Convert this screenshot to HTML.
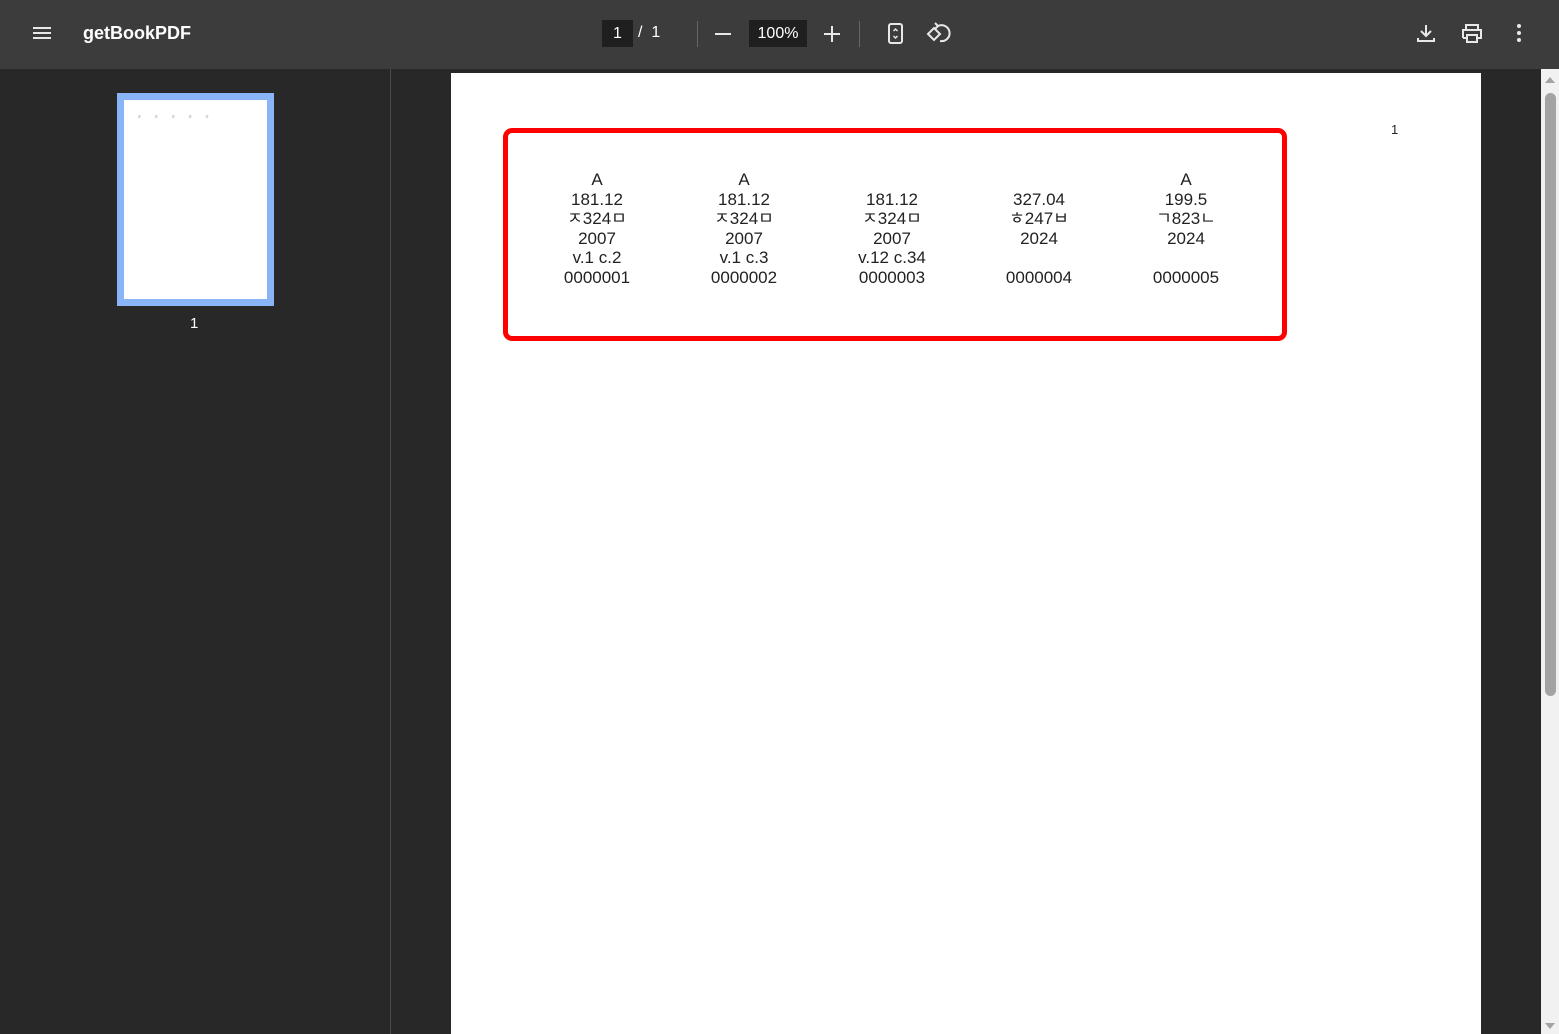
<!DOCTYPE html>
<html><head><meta charset="utf-8"><style>
*{margin:0;padding:0;box-sizing:border-box}
body{width:1559px;height:1034px;background:#282828;overflow:hidden;position:relative;font-family:"Liberation Sans","Noto Sans CJK KR",sans-serif}
.tb{position:absolute;left:0;top:0;width:1559px;height:69px;background:#3c3c3c;color:#fff}
.side{position:absolute;left:0;top:69px;width:391px;height:965px;background:#282828;border-right:1px solid #4a4a4a}
.page{position:absolute;left:451px;top:73px;width:1030px;height:961px;background:#fff}
.col{position:absolute;top:170px;width:120px;text-align:center;font-size:17px;line-height:19.5px;color:#222}
.red{position:absolute;left:503px;top:128px;width:784px;height:213px;border:5px solid #f00;border-radius:9px}
.sb{position:absolute;left:1541px;top:69px;width:18px;height:965px;background:#f1f1f1}
</style></head><body>
<div class="tb">
 <svg style="position:absolute;left:32px;top:25px" width="20" height="16"><path d="M1 3h18M1 8h18M1 13h18" stroke="#e8e8e8" stroke-width="2"/></svg>
 <div style="position:absolute;left:83px;top:23px;font-size:18px;font-weight:bold">getBookPDF</div>
 <div style="position:absolute;left:602px;top:20px;width:31px;height:27px;background:#1f1f1f;text-align:center;line-height:27px;font-size:16px">1</div>
 <div style="position:absolute;left:638px;top:24px;font-size:16px">/&nbsp;&nbsp;1</div>
 <div style="position:absolute;left:697px;top:21px;width:1px;height:26px;background:#666"></div>
 <div style="position:absolute;left:715px;top:33px;width:16px;height:2px;background:#e8e8e8"></div>
 <div style="position:absolute;left:749px;top:20px;width:58px;height:27px;background:#1f1f1f;text-align:center;line-height:27px;font-size:16px">100%</div>
 <div style="position:absolute;left:824px;top:33px;width:16px;height:2px;background:#e8e8e8"></div>
 <div style="position:absolute;left:831px;top:26px;width:2px;height:16px;background:#e8e8e8"></div>
 <div style="position:absolute;left:859px;top:21px;width:1px;height:26px;background:#666"></div>
 <svg style="position:absolute;left:885px;top:22px" width="22" height="24"><rect x="4" y="2" width="13" height="19" rx="2" fill="none" stroke="#e8e8e8" stroke-width="2"/><path d="M8.5 9l2-2 2 2M8.5 14l2 2 2-2" stroke="#e8e8e8" stroke-width="1.5" fill="none"/></svg>
 <svg style="position:absolute;left:925px;top:22px" width="26" height="24"><path d="M3 12l6-6 6 6-6 6z" fill="none" stroke="#e8e8e8" stroke-width="2"/><path d="M13 4a8 8 0 1 1 2 15" fill="none" stroke="#e8e8e8" stroke-width="2"/><path d="M10 1l3 3-3 3" fill="none" stroke="#e8e8e8" stroke-width="2"/></svg>
 <svg style="position:absolute;left:1415px;top:22px" width="22" height="22"><path d="M11 3v11M6 9l5 5 5-5M3 16v3h16v-3" fill="none" stroke="#e8e8e8" stroke-width="2"/></svg>
 <svg style="position:absolute;left:1460px;top:22px" width="24" height="22"><path d="M6 7V3h12v4M3 16V8h18v8h-3M6 16H3" fill="none" stroke="#e8e8e8" stroke-width="2"/><rect x="7" y="13" width="10" height="7" fill="none" stroke="#e8e8e8" stroke-width="2"/></svg>
 <svg style="position:absolute;left:1514px;top:23px" width="10" height="22"><circle cx="5" cy="3" r="2" fill="#e8e8e8"/><circle cx="5" cy="10" r="2" fill="#e8e8e8"/><circle cx="5" cy="17" r="2" fill="#e8e8e8"/></svg>
</div>
<div class="side">
 <div style="position:absolute;left:117px;top:24px;width:157px;height:213px;border:7px solid #8ab4f8;background:#fff">
  <div style="position:absolute;left:14px;top:14px;font-size:5px;color:#999;letter-spacing:14px">≡≡≡≡≡</div>
 </div>
 <div style="position:absolute;left:190px;top:246px;color:#fff;font-size:15px">1</div>
</div>
<div class="page"></div>
<div style="position:absolute;left:1391px;top:122px;font-size:13px;color:#222">1</div>
<div class="col" style="left:537px">A<br>181.12<br>ㅈ324ㅁ<br>2007<br>v.1 c.2<br>0000001</div>
<div class="col" style="left:684px">A<br>181.12<br>ㅈ324ㅁ<br>2007<br>v.1 c.3<br>0000002</div>
<div class="col" style="left:832px">&nbsp;<br>181.12<br>ㅈ324ㅁ<br>2007<br>v.12 c.34<br>0000003</div>
<div class="col" style="left:979px">&nbsp;<br>327.04<br>ㅎ247ㅂ<br>2024<br>&nbsp;<br>0000004</div>
<div class="col" style="left:1126px">A<br>199.5<br>ㄱ823ㄴ<br>2024<br>&nbsp;<br>0000005</div>
<div class="red"></div>
<div class="sb">
 <svg style="position:absolute;left:3px;top:6px" width="12" height="10"><path d="M1 8l5-6 5 6z" fill="#a3a3a3"/></svg>
 <div style="position:absolute;left:4px;top:24px;width:11px;height:603px;border-radius:6px;background:#a3a3a3"></div>
 <svg style="position:absolute;left:3px;top:952px" width="12" height="10"><path d="M1 2l5 6 5-6z" fill="#a3a3a3"/></svg>
</div>
</body></html>
